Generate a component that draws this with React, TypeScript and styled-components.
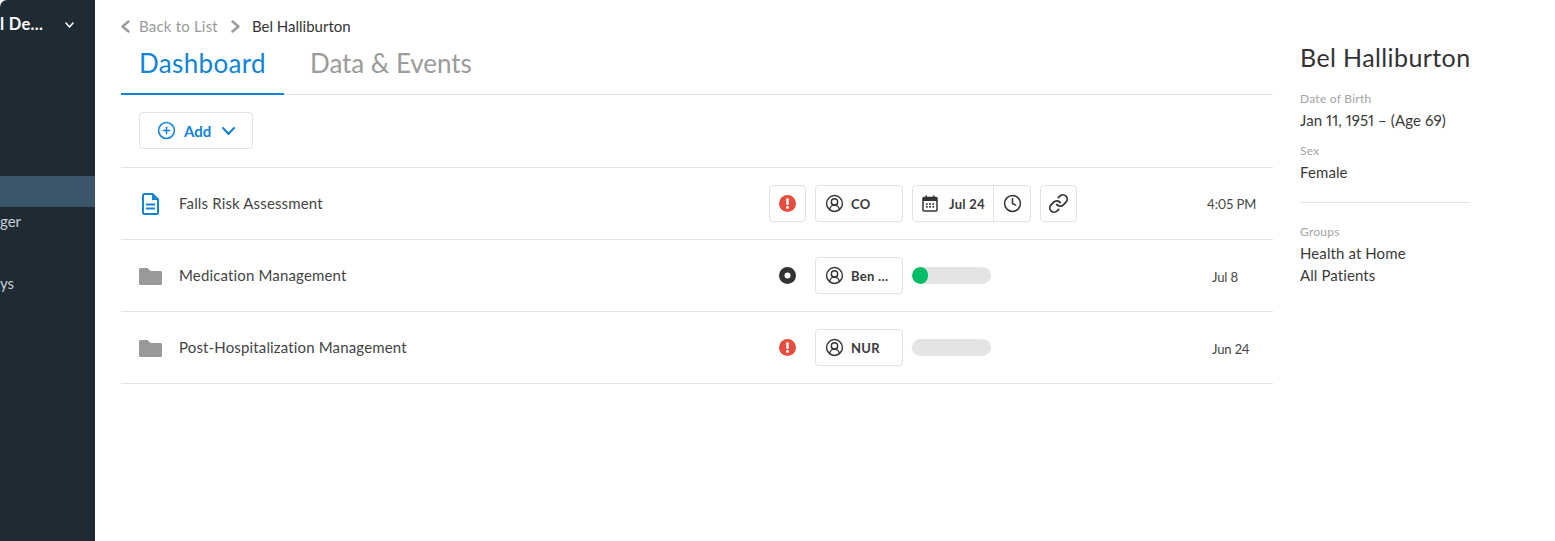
import React from 'react';
import styled, { createGlobalStyle } from 'styled-components';
import { CirclePlus, CircleUserRound, Clock, Link } from 'lucide-react';

const Global = createGlobalStyle`
  html, body { margin: 0; padding: 0; background: #fff; }
  body { font-family: "Lato", "Open Sans", sans-serif; font-variant-numeric: proportional-nums; color: #3a3a3a; height: 541px; overflow: hidden; }
`;

const Page = styled.div`display: flex; width: 1555px; height: 541px; overflow: hidden;`;

const Sidebar = styled.aside`
  width: 95px; flex: none; height: 541px; background: #1f2b34; border-top-left-radius: 7px;
  display: flex; flex-direction: column; overflow: hidden;
`;
const SideHeader = styled.div`
  height: 50px; display: flex; align-items: center; justify-content: space-between; padding-right: 21px;
  color: #fff; font-weight: 700; font-size: 16.5px; letter-spacing: 0.3px; white-space: nowrap;
`;
const SideTitle = styled.span`padding-bottom: 2px;`;
const SideNav = styled.nav`margin-top: 126px; display: flex; flex-direction: column;`;
const SideItem = styled.div<{ $active?: boolean }>`
  height: 31px; box-sizing: border-box; padding-bottom: 3px; display: flex; align-items: center;
  background: ${p => (p.$active ? '#3b5669' : 'transparent')};
  color: #c9ced2; font-size: 15px; white-space: nowrap;
`;

const Main = styled.main`width: 1152px; margin-left: 26px; flex: none;`;
const Crumbs = styled.div`
  height: 42px; padding-top: 10px; box-sizing: border-box; display: flex; align-items: center;
  font-size: 15px; letter-spacing: 0.2px; color: #9a9a9a;
`;
const CrumbBack = styled.span`margin-left: 9px; margin-right: 13px;`;
const CrumbCurrent = styled.span`color: #333; margin-left: 12px; letter-spacing: 0;`;
const Tabs = styled.div`display: flex; height: 53px; box-sizing: border-box; border-bottom: 1px solid #e2e2e2;`;
const Tab = styled.div<{ $active?: boolean }>`
  height: 53px; box-sizing: border-box; padding: 0 18px; margin-right: 8px; font-size: 26px; line-height: 42px;
  letter-spacing: ${p => (p.$active ? '0.35px' : '-0.05px')};
  color: ${p => (p.$active ? '#0f84d8' : '#9b9b9b')};
  border-bottom: ${p => (p.$active ? '2px solid #0f84d8' : 'none')};
`;
const Toolbar = styled.div`height: 73px; padding: 17px 0 0 18px; display: flex; align-items: flex-start; border-bottom: 1px solid #e2e2e2; box-sizing: border-box;`;
const AddButton = styled.div`
  width: 114px; height: 37px; box-sizing: border-box; border: 1px solid #e2e2e2; border-radius: 4px;
  display: flex; align-items: center; padding-left: 17px; gap: 8px;
  color: #0f84d8; font-weight: 700; font-size: 15px;
`;
const AddCaret = styled.span`margin-left: 3px; display: flex;`;
const Row = styled.div`
  height: 72px; box-sizing: border-box; border-bottom: 1px solid #e2e2e2; display: flex; align-items: center; padding-left: 18px;
`;
const IconSlot = styled.div`width: 40px; flex: none; display: flex; align-items: center;`;
const FileSlot = styled.span`margin-left: 3px; display: flex;`;
const Name = styled.div`width: 590px; flex: none; padding-bottom: 2px; font-size: 15px; letter-spacing: 0.15px; color: #444;`;
const Box = styled.div<{ $w?: number }>`
  width: ${p => p.$w ?? 37}px; height: 37px; box-sizing: border-box; border: 1px solid #e2e2e2; border-radius: 4px; flex: none;
  display: flex; align-items: center; justify-content: center;
`;
const StatusSlot = styled.div`width: 37px; height: 37px; flex: none; display: flex; align-items: center; justify-content: center;`;
const Assignee = styled(Box)`
  margin-left: 9px; justify-content: flex-start; padding-left: 9px; gap: 7px;
  font-size: 13px; font-weight: 700; letter-spacing: 0.3px; color: #3a3a3a;
`;
const Schedule = styled.div`margin-left: 9px; width: 295px; flex: none; display: flex; align-items: center;`;
const DateGroup = styled.div`
  width: 119px; height: 37px; box-sizing: border-box; border: 1px solid #e2e2e2; border-radius: 4px;
  display: flex; align-items: center; font-size: 13px; font-weight: 700; letter-spacing: 0.3px;
`;
const DatePart = styled.div`
  width: 81px; height: 100%; flex: none; box-sizing: border-box; border-right: 1px solid #e2e2e2;
  display: flex; align-items: center; padding-left: 9px; gap: 11px;
`;
const ClockPart = styled.div`flex: 1; display: flex; align-items: center; justify-content: center;`;
const LinkBox = styled(Box)`margin-left: 9px;`;
const Progress = styled.div`width: 79px; height: 17px; background: #e4e4e4; border-radius: 9px; overflow: hidden;`;
const ProgressFill = styled.div`height: 100%; background: #00bd66; border-radius: 9px;`;
const When = styled.div<{ $indent: number; $drop: number }>`
  font-size: 13px; letter-spacing: -0.1px; color: #444; margin-left: ${p => p.$indent}px; padding-top: ${p => p.$drop}px; white-space: nowrap;
`;

const Aside = styled.aside`width: 170px; margin-left: 27px; flex: none; padding-top: 41px;`;
const Title = styled.h1`margin: 0 0 18px; font-size: 25px; line-height: 32px; font-weight: 400; letter-spacing: 0.4px; color: #333; white-space: nowrap;`;
const Label = styled.div`font-size: 12px; line-height: 16px; margin-bottom: 2px; letter-spacing: 0.25px; color: #a3a3a3;`;
const Value = styled.div`font-size: 15px; line-height: 22px; letter-spacing: 0.1px; color: #3a3a3a; white-space: nowrap;`;
const Field = styled.div`margin-bottom: 12px;`;
const Divider = styled.hr`border: 0; border-top: 1px solid #e2e2e2; margin: 19px 0 21px;`;

const Chevron = ({ dir, w, h, sw, color }: { dir: 'left' | 'right' | 'down'; w: number; h: number; sw: number; color: string }) => {
  const d = dir === 'left' ? `M${w - 1.5} 1.5L1.5 ${h / 2}L${w - 1.5} ${h - 1.5}`
    : dir === 'right' ? `M1.5 1.5L${w - 1.5} ${h / 2}L1.5 ${h - 1.5}`
    : `M1 1L${w / 2} ${h - 1}L${w - 1} 1`;
  return <svg width={w} height={h} viewBox={`0 0 ${w} ${h}`} fill="none" style={{ flex: 'none' }}><path d={d} stroke={color} strokeWidth={sw} strokeLinecap="round" strokeLinejoin="round" /></svg>;
};

const FileIcon = () => (
  <svg width="17" height="22" viewBox="0 0 17 22" fill="none">
    <path d="M2.5 1h8l5.5 5.5V19.5a1.5 1.5 0 0 1-1.5 1.5h-12A1.5 1.5 0 0 1 1 19.5v-17A1.5 1.5 0 0 1 2.5 1z" stroke="#0f84d8" strokeWidth="2" strokeLinejoin="round" />
    <path d="M10 1.5v5.5h5.5z" fill="#0f84d8" />
    <rect x="4" y="10.5" width="9" height="2" fill="#0f84d8" />
    <rect x="4" y="14.5" width="9" height="2" fill="#0f84d8" />
  </svg>
);
const FolderIcon = () => (
  <svg width="23" height="18" viewBox="0 0 23 18">
    <path d="M1.5 1h7l3 3h10A1.5 1.5 0 0 1 23 5.5v11a1.5 1.5 0 0 1-1.5 1.5h-20A1.5 1.5 0 0 1 0 16.5v-14A1.5 1.5 0 0 1 1.5 1z" fill="#999" />
  </svg>
);
const AlertIcon = () => (
  <svg width="17" height="17" viewBox="0 0 17 17">
    <circle cx="8.5" cy="8.5" r="8.5" fill="#e74c3f" />
    <rect x="7.2" y="3.2" width="2.6" height="6.8" rx="1.2" fill="#fff" />
    <circle cx="8.5" cy="12.4" r="1.4" fill="#fff" />
  </svg>
);
const RecordIcon = () => (
  <svg width="17" height="17" viewBox="0 0 17 17">
    <circle cx="8.5" cy="8.5" r="8.5" fill="#333" />
    <circle cx="8.5" cy="8.5" r="3" fill="#fff" />
  </svg>
);
const CalendarIcon = () => (
  <svg width="16" height="17" viewBox="0 0 16 17" fill="none">
    <rect x="1" y="2.5" width="14" height="13.5" rx="1" stroke="#333" strokeWidth="1.5" />
    <rect x="1" y="3" width="14" height="3" fill="#333" />
    <rect x="3.5" y="0.5" width="1.6" height="3" fill="#333" />
    <rect x="10.9" y="0.5" width="1.6" height="3" fill="#333" />
    {[4, 7.2, 10.4].flatMap(x => [8.2, 11].map(y => <rect key={`${x}-${y}`} x={x} y={y} width="1.7" height="1.7" fill="#333" />))}
  </svg>
);
const UserIcon = () => <CircleUserRound size={19} strokeWidth={1.8} color="#333" style={{ flex: 'none' }} />;

export default function App() {
  return (
    <Page>
      <Global />
      <Sidebar>
        <SideHeader><SideTitle>l De...</SideTitle><Chevron dir="down" w={9} h={6} sw={1.6} color="#fff" /></SideHeader>
        <SideNav>
          <SideItem $active />
          <SideItem>ger</SideItem>
          <SideItem />
          <SideItem>ys</SideItem>
        </SideNav>
      </Sidebar>
      <Main>
        <Crumbs>
          <Chevron dir="left" w={9} h={13} sw={2.4} color="#9a9a9a" />
          <CrumbBack>Back to List</CrumbBack>
          <Chevron dir="right" w={9} h={13} sw={2.4} color="#9a9a9a" />
          <CrumbCurrent>Bel Halliburton</CrumbCurrent>
        </Crumbs>
        <Tabs>
          <Tab $active>Dashboard</Tab>
          <Tab>Data &amp; Events</Tab>
        </Tabs>
        <Toolbar>
          <AddButton>
            <CirclePlus size={19} strokeWidth={1.9} style={{ flex: 'none' }} />
            Add
            <AddCaret><Chevron dir="down" w={13} h={8} sw={2} color="#0f84d8" /></AddCaret>
          </AddButton>
        </Toolbar>
        <Row>
          <IconSlot><FileSlot><FileIcon /></FileSlot></IconSlot>
          <Name>Falls Risk Assessment</Name>
          <Box><AlertIcon /></Box>
          <Assignee $w={88}><UserIcon />CO</Assignee>
          <Schedule>
            <DateGroup>
              <DatePart><CalendarIcon />Jul 24</DatePart>
              <ClockPart><Clock size={19} strokeWidth={1.9} color="#333" /></ClockPart>
            </DateGroup>
            <LinkBox><Link size={21} strokeWidth={2} color="#333" /></LinkBox>
          </Schedule>
          <When $indent={0} $drop={1}>4:05 PM</When>
        </Row>
        <Row>
          <IconSlot><FolderIcon /></IconSlot>
          <Name>Medication Management</Name>
          <StatusSlot><RecordIcon /></StatusSlot>
          <Assignee $w={88}><UserIcon />Ben ...</Assignee>
          <Schedule>
            <Progress><ProgressFill style={{ width: '20%' }} /></Progress>
          </Schedule>
          <When $indent={5} $drop={3}>Jul 8</When>
        </Row>
        <Row>
          <IconSlot><FolderIcon /></IconSlot>
          <Name>Post-Hospitalization Management</Name>
          <StatusSlot><AlertIcon /></StatusSlot>
          <Assignee $w={88}><UserIcon />NUR</Assignee>
          <Schedule>
            <Progress />
          </Schedule>
          <When $indent={5} $drop={3}>Jun 24</When>
        </Row>
      </Main>
      <Aside>
        <Title>Bel Halliburton</Title>
        <Field><Label>Date of Birth</Label><Value>Jan 11, 1951 – (Age 69)</Value></Field>
        <Field><Label>Sex</Label><Value>Female</Value></Field>
        <Divider />
        <Label>Groups</Label>
        <Value>Health at Home</Value>
        <Value>All Patients</Value>
      </Aside>
    </Page>
  );
}
